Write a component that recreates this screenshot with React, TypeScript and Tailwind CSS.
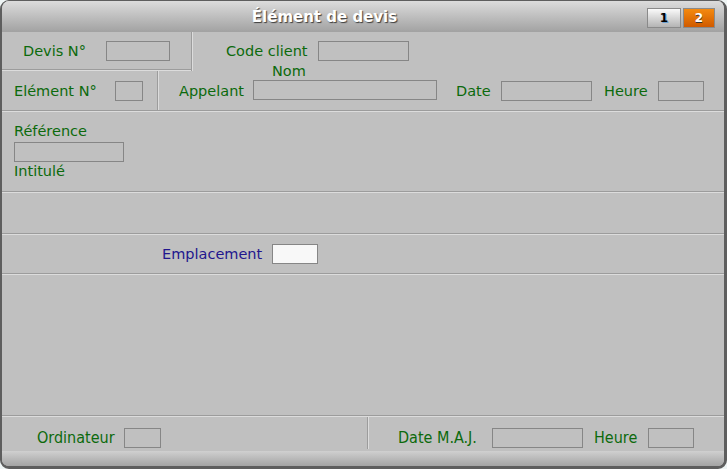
import React from "react";

const HLine = () => (
  <div className="h-[2px] shrink-0 border-t border-t-[#9c9c9c] border-b border-b-[#dcdcdc]" />
);

const VLine = ({ className = "" }: { className?: string }) => (
  <div className={`w-[2px] shrink-0 self-stretch border-l border-l-[#9c9c9c] border-r border-r-[#dcdcdc] ${className}`} />
);

const Label = ({ text, className = "" }: { text: string; className?: string }) => (
  <span className={`shrink-0 whitespace-nowrap text-[14.5px] leading-4 text-[#0c6a0c] ${className}`}>{text}</span>
);

const SmallLabel = ({ text, className = "" }: { text: string; className?: string }) => (
  <span
    className={`shrink-0 whitespace-nowrap font-['DejaVu_Sans_Condensed','DejaVu_Sans',sans-serif] font-stretch-condensed text-[16px] leading-5 text-[#0c6a0c] ${className}`}
  >
    {text}
  </span>
);

const Field = ({ className = "", white = false }: { className?: string; white?: boolean }) => (
  <div className={`h-[20px] shrink-0 border border-[#868686] ${white ? "bg-[#f8f8f8]" : "bg-[#c0c0c0]"} ${className}`} />
);

export default function App() {
  return (
    <div className="w-[727px] h-[469px] bg-[#eef4f4] font-['DejaVu_Sans',sans-serif]">
      <div className="h-full flex flex-col overflow-hidden rounded-[9px] border-l-2 border-t border-r-[3px] border-b-[3px] border-[#5e5e5e] bg-[#c0c0c0]">
        {/* title bar */}
        <div className="h-[31px] shrink-0 flex bg-linear-to-b from-[#dcdcdc] to-[#a2a2a2]">
          <div className="flex-1 flex items-center justify-center pt-[1px] text-[15px] font-bold text-white [text-shadow:1px_1px_1px_#3c3c3c]">
            Élément de devis
          </div>
          <div className="flex gap-[2px] pt-[7px] pr-[9px]">
            <div className="w-[34px] h-[20px] flex items-center justify-center border border-[#8a8a8a] bg-linear-to-b from-[#fafafa] to-[#b4b4b4] text-[12px] font-bold text-black [text-shadow:1px_1px_0_#6aa0d0]">
              1
            </div>
            <div className="w-[32px] h-[20px] flex items-center justify-center border border-[#8a8a8a] bg-linear-to-b from-[#f48a10] to-[#d05a00] text-[12px] font-bold text-white [text-shadow:0_1px_0_#303030]">
              2
            </div>
          </div>
        </div>

        {/* row 1 */}
        <div className="h-[39px] shrink-0 flex">
          <div className="w-[189px] shrink-0 flex flex-col">
            <div className="h-[37px] flex items-center pl-[21px]">
              <Label text="Devis N°" className="w-[83px]" />
              <Field className="w-[64px]" />
            </div>
            <HLine />
          </div>
          <VLine />
          <div className="flex-1 h-[37px] flex items-center pl-[33px]">
            <Label text="Code client" className="w-[92px]" />
            <Field className="w-[91px]" />
          </div>
        </div>

        {/* row 2 */}
        <div className="h-[39px] shrink-0 flex">
          <div className="w-[155px] shrink-0 flex items-center pl-[12px]">
            <Label text="Elément N°" className="w-[101px]" />
            <Field className="w-[28px]" />
          </div>
          <VLine />
          <div className="flex-1 flex items-center pl-[20px]">
            <Label text="Appelant" className="w-[74px]" />
            <div className="self-start -mt-[8px] flex flex-col">
              <Label text="Nom" className="ml-[19px]" />
              <Field className="w-[184px] mt-[1px]" />
            </div>
            <Label text="Date" className="ml-[19px] w-[45px]" />
            <Field className="w-[91px]" />
            <Label text="Heure" className="ml-[12px] w-[54px]" />
            <Field className="w-[46px]" />
          </div>
        </div>
        <HLine />

        {/* référence / intitulé */}
        <div className="h-[79px] shrink-0 flex flex-col pl-[12px] pt-[11px]">
          <Label text="Référence" />
          <Field className="w-[110px] mt-[3px]" />
          <Label text="Intitulé" className="mt-[1px]" />
        </div>
        <HLine />

        <div className="h-[40px] shrink-0" />
        <HLine />

        {/* emplacement */}
        <div className="h-[38px] shrink-0 flex items-center pl-[160px]">
          <Label text="Emplacement" className="w-[110px] text-[#22168e]" />
          <Field className="w-[46px]" white />
        </div>
        <HLine />

        <div className="h-[140px] shrink-0" />
        <HLine />

        {/* bottom info */}
        <div className="h-[34px] shrink-0 flex">
          <div className="w-[365px] shrink-0 flex items-start pt-[11px] pl-[35px]">
            <SmallLabel text="Ordinateur" className="w-[87px]" />
            <Field className="w-[37px]" />
          </div>
          <VLine className="mb-[2px]" />
          <div className="flex-1 flex items-start pt-[11px] pl-[29px]">
            <SmallLabel text="Date M.A.J." className="w-[94px]" />
            <Field className="w-[91px]" />
            <SmallLabel text="Heure" className="ml-[11px] w-[54px]" />
            <Field className="w-[46px]" />
          </div>
        </div>

        <div className="flex-1 bg-linear-to-b from-[#d0d0d0] to-[#a4a4a4]" />
      </div>
    </div>
  );
}
